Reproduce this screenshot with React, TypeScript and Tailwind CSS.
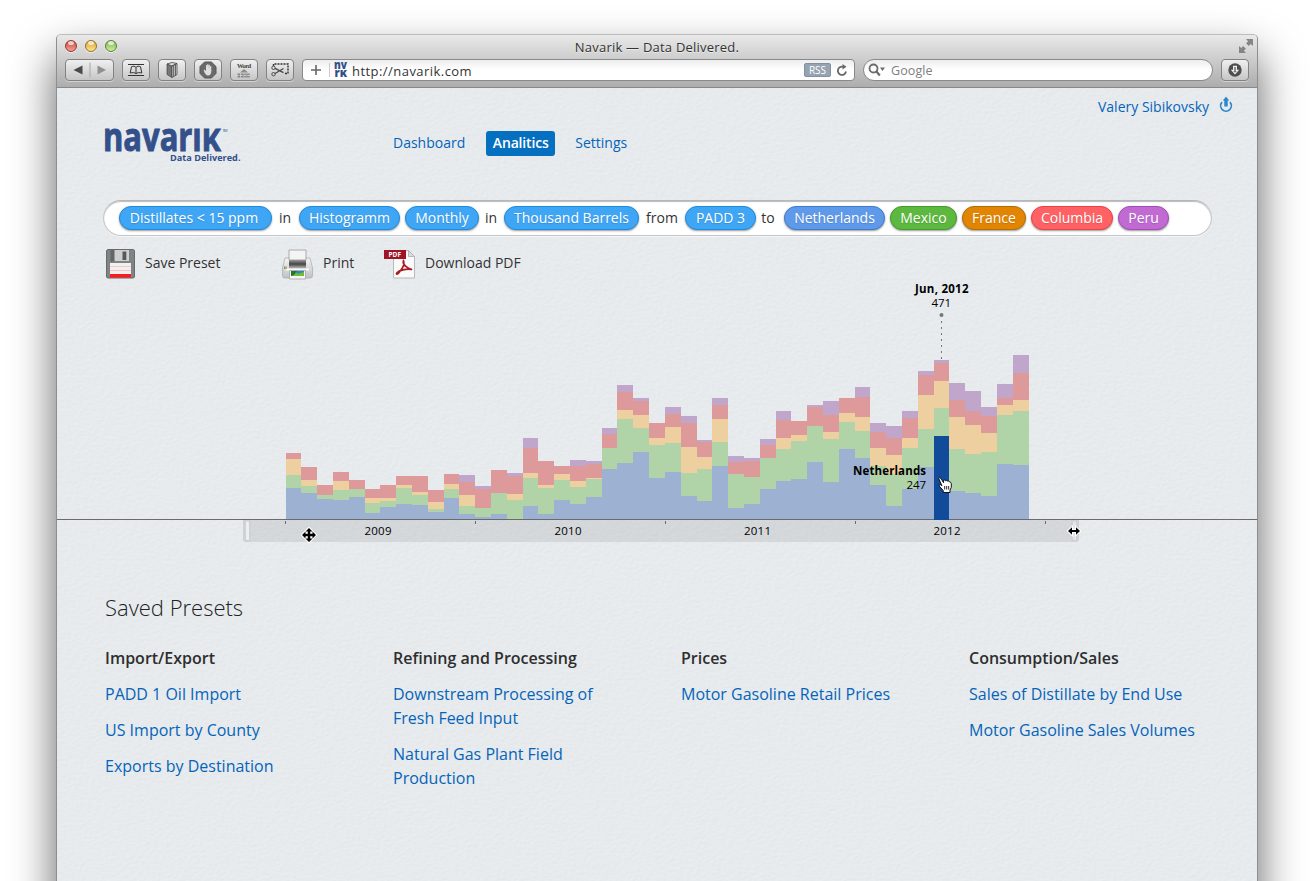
import React from "react";

const BASELINE = 519;
const STEP = 15.81;
const FIRST_X = 286;

// Top edge of each layer per month: peru, columbia, france, mexico, netherlands
const MONTHS: number[][] = [
  [453, 453, 459, 475, 488], [467, 467, 480, 486, 493], [485, 485, 495, 495, 499], [472, 472, 481, 490, 500],
  [480, 480, 489, 489, 497], [489, 489, 498, 503, 513], [485, 485, 498, 501, 507], [476, 476, 485, 488, 504],
  [476, 476, 492, 495, 505], [490, 490, 502, 509, 512], [474, 474, 484, 489, 498], [475, 482, 495, 506, 514],
  [486, 489, 508, 508, 517], [470, 470, 493, 493, 514], [473, 476, 494, 500, 519], [438, 448, 473, 478, 506],
  [461, 461, 485, 488, 514], [466, 466, 474, 480, 500], [460, 466, 481, 487, 504], [461, 464, 478, 479, 497],
  [428, 434, 448, 448, 469], [385, 392, 410, 419, 463], [398, 401, 415, 428, 452], [423, 423, 438, 445, 478],
  [407, 414, 427, 443, 472], [416, 423, 447, 473, 496], [440, 442, 457, 469, 501], [398, 405, 419, 442, 466],
  [456, 462, 474, 474, 508], [458, 461, 477, 477, 504], [439, 445, 458, 458, 489], [411, 420, 438, 449, 481],
  [421, 421, 435, 441, 479], [405, 407, 426, 426, 462], [401, 415, 432, 439, 482], [398, 398, 413, 422, 449],
  [387, 397, 417, 431, 458], [423, 432, 448, 466, 485], [426, 438, 455, 474, 506], [411, 418, 438, 448, 489],
  [371, 375, 395, 429, 467], [360, 363, 381, 408, 436], [383, 400, 417, 449, 491], [391, 411, 425, 454, 493],
  [407, 416, 433, 452, 496], [384, 398, 405, 415, 464], [355, 373, 400, 411, 465],
];
const LAYERS = ["#c1a6cb", "#de9a9b", "#eecfa0", "#b0d3a8", "#9db2d2"];
const SELECTED = 41;
const YEARS = [
  { label: "2009", x: 378 },
  { label: "2010", x: 568 },
  { label: "2011", x: 757.5 },
  { label: "2012", x: 947 },
];

function Texture() {
  return (
    <svg className="pointer-events-none absolute inset-0 h-full w-full opacity-15" aria-hidden="true">
      <filter id="paper" x="0" y="0" width="100%" height="100%" colorInterpolationFilters="sRGB">
        <feTurbulence type="fractalNoise" baseFrequency="0.24 0.36" numOctaves={3} seed={4} result="n" />
        <feDiffuseLighting in="n" surfaceScale={0.32} lightingColor="#eff3f6" diffuseConstant={1.18}>
          <feDistantLight azimuth={235} elevation={55} />
        </feDiffuseLighting>
      </filter>
      <rect width="100%" height="100%" filter="url(#paper)" />
    </svg>
  );
}

function Light({ className }: { className: string }) {
  return (
    <span className={`relative h-3 w-3 overflow-hidden rounded-full border shadow-[0_1px_0_rgba(255,255,255,.6)] ${className}`}>
      <span className="absolute left-[2px] top-0 h-1 w-[6px] rounded-full bg-white/70" />
    </span>
  );
}

function ToolButton({ className = "w-[28px]", children }: { className?: string; children: React.ReactNode }) {
  return (
    <span
      className={`flex h-[22px] shrink-0 items-center justify-center rounded-[4px] border border-[#828282] bg-linear-to-b from-[#f0f0f0] to-[#c6c6c6] shadow-[0_1px_0_rgba(255,255,255,.4)] ${className}`}
    >
      {children}
    </span>
  );
}

function BrowserChrome() {
  return (
    <header className="relative h-[53px] rounded-t-[4px] border-b border-[#888] bg-linear-to-b from-[#e9e9e9] to-[#adadad]">
      <div className="flex h-6 items-center pl-2">
        <div className="-mt-[3px] flex w-[60px] gap-2">
          <Light className="border-[#8f3a32] bg-linear-to-b from-[#c93f35] to-[#f5a095]" />
          <Light className="border-[#95702a] bg-linear-to-b from-[#dc9f30] to-[#fbe68c]" />
          <Light className="border-[#5b8038] bg-linear-to-b from-[#7bb150] to-[#cdf09d]" />
        </div>
        <h1 className="flex-1 text-center text-[13px] leading-6 tracking-[0.22px] text-[#333] [text-shadow:0_1px_0_rgba(255,255,255,.5)]">
          Navarik — Data Delivered.
        </h1>
        <div className="-mt-[3px] flex w-[68px] justify-end pr-[3px]">
          <svg width="16" height="16" viewBox="0 0 16 16" fill="#858585">
            <path d="M8 1h7v7l-2.200-2.100-2 2-2.700-2.700 2-2zM1 8l2.200 2.100 2-2L7.900 10.800l-2 2L8 15H1z" />
          </svg>
        </div>
      </div>
      <div className="flex h-[22px] items-center gap-2 pl-2 pr-2">
        <ToolButton className="w-[49px]">
          <svg width="47" height="20" viewBox="0 0 47 20">
            <path d="M16.500 5.500v9l-9-4.500z" fill="#4a4a4a" />
            <path d="M24 2.500v15" stroke="#a5a5a5" />
            <path d="M31.500 5.500v9l8.500-4.500z" fill="#909090" />
          </svg>
        </ToolButton>
        <ToolButton>
          <svg width="18" height="14" viewBox="0 0 18 14" fill="none" stroke="#333">
            <path d="M1 1.500h16M1 12.500h16" strokeWidth="1.100" />
            <path d="M9 4.500v6M9 4.500C8 3 6 3 4.500 3.700l-1.300 6.300c2-.6 4.300-.6 5.800.6 1.500-1.200 3.800-1.200 5.800-.6l-1.300-6.300C12 3 10 3 9 4.500z" />
          </svg>
        </ToolButton>
        <ToolButton>
          <svg width="12" height="16" viewBox="0 0 12 16">
            <path d="m1 2 5 2v11.500l-5-3z" fill="#777" stroke="#444" strokeWidth=".7" />
            <path d="m1 2 5-1.500 5 1L6 4zM6 4l5-2.500v11L6 15.500z" fill="#ddd" stroke="#444" strokeWidth=".8" />
            <path d="M7.700 3.500v11M9.400 2.700v11" stroke="#555" />
          </svg>
        </ToolButton>
        <ToolButton>
          <svg width="18" height="18" viewBox="0 0 18 18">
            <path d="M5.600 1h6.800L17 5.600v6.800L12.400 17H5.600L1 12.400V5.600z" fill="#6a6a6a" stroke="#555" />
            <path d="M5.500 8.500 7 10V4.500q.7-.8 1.200 0V8 3.500q.7-.8 1.300 0V8l.2-4q.7-.7 1.200 0v4.300l.2-3q.7-.6 1.200 0v5.200Q12 14.500 9 14.500q-2.400 0-4.300-5z" fill="#dedede" />
          </svg>
        </ToolButton>
        <ToolButton>
          <svg width="18" height="18" viewBox="0 0 18 18" fill="#3d3d3d" className="overflow-visible">
            <text x="9" y="7" textAnchor="middle" fontSize="6.500" fontWeight="700" textLength="14" fontFamily="Liberation Serif, serif">Word</text>
            <path d="m9 8 4 3.500H5z" fill="#8c8c8c" />
            <path d="M2.500 13.200h13M2.500 15.800h13" stroke="#666" strokeDasharray="2.500 .8" strokeWidth=".9" />
            <path d="M4 12.500v4M8 12.500v4M12 12.500v4" stroke="#777" strokeWidth=".7" />
          </svg>
        </ToolButton>
        <ToolButton>
          <svg width="20" height="16" viewBox="0 0 20 16" fill="none" stroke="#4a4a4a">
            <path d="M3.500 4V2H18v9.500h-3" strokeDasharray="2 1" strokeWidth="1.400" stroke="#333" />
            <path d="m5 6.300 8.500 4.300M5 11.500l8.500-5" strokeWidth="1.300" />
            <circle cx="3.500" cy="5.800" r="1.700" />
            <circle cx="3.500" cy="12.200" r="1.700" />
          </svg>
        </ToolButton>
        <div className="flex h-[22px] w-[553px] shrink-0 items-center rounded-[4px] border border-[#8a8a8a] bg-linear-to-b from-[#ededed] via-white to-white pl-[7px] pr-[6px]">
          <svg width="20" height="14" viewBox="0 0 20 14" className="shrink-0">
            <path d="M1 7h10M6 2v10" stroke="#666" strokeWidth="1.600" />
            <path d="M19.500 0v14" stroke="#c9c9c9" />
          </svg>
          <svg width="15" height="18" viewBox="0 0 15 18" className="ml-1 shrink-0 overflow-visible" fill="#31508a">
            <g fontFamily="Open Sans, sans-serif" fontWeight="800" fontSize="12">
              <text x="0" y="7.500" textLength="13" lengthAdjust="spacingAndGlyphs">nv</text>
              <text x="0.500" y="15.500" textLength="12.500" lengthAdjust="spacingAndGlyphs">rĸ</text>
            </g>
          </svg>
          <span className="ml-[3px] flex-1 pt-[3px] text-[13px] tracking-[0.45px] text-[#333]">http://navarik.com</span>
          <span className="flex h-[14px] w-[27px] items-center justify-center rounded-[2px] border border-[#8290a0] bg-[#96a3b1] text-[10px] leading-none text-white">
            RSS
          </span>
          <svg width="12" height="13" viewBox="0 0 12 13" className="ml-[5px]" fill="none" stroke="#666" strokeWidth="1.800">
            <path d="M7 2.800A4.100 4.100 0 1 0 10 7.500" />
            <path d="M6.500 0v5.600L10.500 2.800z" fill="#666" stroke="none" />
          </svg>
        </div>
        <div className="flex h-[22px] w-[350px] shrink-0 items-center rounded-full border border-[#8a8a8a] bg-linear-to-b from-[#ededed] via-white to-white pl-1">
          <svg width="18" height="14" viewBox="0 0 18 14" fill="none" stroke="#6a6a6a" strokeWidth="1.800">
            <circle cx="5.500" cy="5.500" r="4" />
            <path d="m8.500 8.500 3.300 4" strokeWidth="2.200" />
            <path d="M12 4.500h5L14.500 8z" fill="#6a6a6a" stroke="none" />
          </svg>
          <span className="ml-[5px] pt-[2px] text-[12.500px] tracking-[0.1px] text-[#808080]">Google</span>
        </div>
        <ToolButton>
          <svg width="14" height="14" viewBox="0 0 14 14">
            <circle cx="7" cy="7" r="6.700" fill="#4e4e4e" />
            <path d="M5 2.700h4v4.100h2.200L7 11.500 2.800 6.800H5z" fill="#f0f0f0" />
            <path d="M6.200 3.900h1.600v4h1L7 9.800 5.200 7.900h1z" fill="#777" />
          </svg>
        </ToolButton>
      </div>
    </header>
  );
}

function Logo() {
  return (
    <svg width="140" height="40" viewBox="105 125 140 40" className="overflow-visible" fill="#33508a" fontFamily="Open Sans, sans-serif">
      <text x="103" y="150" fontSize="40" fontWeight="700" stroke="#33508a" strokeWidth="1" textLength="118" lengthAdjust="spacingAndGlyphs">navarıĸ</text>
      <text x="222.500" y="131" fontSize="4" textLength="5">TM</text>
      <text x="170" y="160" fontSize="9.500" fontWeight="700" textLength="70.500" lengthAdjust="spacingAndGlyphs">Data Delivered.</text>
    </svg>
  );
}

const blue = "border-[#1b8ce0] bg-[#3fa5f5]";

function Pill({ className, children }: { className: string; children: React.ReactNode }) {
  return (
    <span
      className={`flex h-6 shrink-0 items-center justify-center rounded-full border pb-px text-[14px] font-medium leading-none text-white shadow-[0_1px_2px_rgba(0,0,0,.4)] [text-shadow:0_1px_1px_rgba(0,0,0,.15)] ${className}`}
    >
      {children}
    </span>
  );
}

function Word({ className, children }: { className: string; children: React.ReactNode }) {
  return <span className={`shrink-0 pb-px text-center text-[14px] leading-none text-[#333] ${className}`}>{children}</span>;
}

function QueryBar() {
  return (
    <div className="ml-[46px] flex h-9 w-[1109px] items-center rounded-full border border-[#c3c6c8] border-t-[#b5b8ba] bg-white pl-[15px] shadow-[inset_0_1px_1px_#bbb,0_1px_0_#f4f6f7]">
      <Pill className={`w-[153px] pr-[3px] ${blue}`}>Distillates &lt; 15 ppm</Pill>
      <Word className="w-[27px] pr-px">in</Word>
      <Pill className={`mr-[5px] w-[101px] ${blue}`}>Histogramm</Pill>
      <Pill className={`w-[74px] ${blue}`}>Monthly</Pill>
      <Word className="w-[25px] pr-px">in</Word>
      <Pill className={`w-[135px] ${blue}`}>Thousand Barrels</Pill>
      <Word className="w-[46px]">from</Word>
      <Pill className={`w-[71px] ${blue}`}>PADD 3</Pill>
      <Word className="w-[28px] pr-1">to</Word>
      <Pill className="mr-[5px] w-[101px] border-[#3f7bc9] bg-[#5f99ea]">Netherlands</Pill>
      <Pill className="mr-[5px] w-[67px] border-[#459a2c] bg-[#5cb83e]">Mexico</Pill>
      <Pill className="mr-[5px] w-[64px] border-[#b06d08] bg-[#e18502]">France</Pill>
      <Pill className="mr-[5px] w-[82px] border-[#ee3e46] bg-[#ff6265]">Columbia</Pill>
      <Pill className="w-[51px] border-[#a24bb6] bg-[#c16bd2]">Peru</Pill>
    </div>
  );
}

function FloppyIcon() {
  return (
    <svg width="29" height="30" viewBox="0 0 29 30">
      <path d="M1.500 .5h26l1 1V28l-1 1h-26l-1-1V1.500z" fill="#808383" stroke="#686b6b" />
      <path d="M5 1h18v11H5z" fill="#cdcfd0" />
      <path d="M4.500 1h4v11.500h-4z" fill="#636666" />
      <path d="M16.500 2.500h3.800V11h-3.800z" fill="#565959" />
      <path d="M4 14h21v11H4z" fill="#f2efef" />
      <path d="M4 17.500h21M4 21.500h21" stroke="#f0c8c8" />
      <path d="M4 25h21v3.500H4z" fill="#fb1c22" />
    </svg>
  );
}

function PrinterIcon() {
  return (
    <svg width="31" height="31" viewBox="0 0 31 31">
      <defs>
        <linearGradient id="slot" x2="0" y2="1">
          <stop offset="0" stopColor="#999" />
          <stop offset=".45" stopColor="#444" />
          <stop offset="1" stopColor="#ccc" />
        </linearGradient>
        <linearGradient id="body" x2="0" y2="1">
          <stop offset="0" stopColor="#f5f5f5" />
          <stop offset="1" stopColor="#bfc1c2" />
        </linearGradient>
      </defs>
      <path d="M3 9h25l2.500 10v7.500q0 2.500-2 2.500h-26q-2 0-2-2.500V19z" fill="url(#body)" stroke="#acaeb0" strokeWidth=".8" />
      <path d="M7 1h17v10H7z" fill="#f4f4f4" stroke="#aaa" />
      <path d="M7 11h17v9H7z" fill="url(#slot)" />
      <path d="M4 19.500h23v2H4z" fill="#fafafa" />
      <path d="M7.500 21.500h16V30h-16z" fill="#f6f6f6" stroke="#b0b0b0" />
      <path d="M9 22h13v5H9z" fill="#258ec1" />
      <path d="m9 27 4-4 3 2 6-2v4z" fill="#78bb31" />
      <path d="m9 22 6 0-3 4-3 1z" fill="#29713a" />
      <path d="M2 17.500h1.500v2.500H2z" fill="#34a8c5" />
      <path d="M3.500 17.500H5v2.500H3.500z" fill="#e4a51b" />
    </svg>
  );
}

function PdfIcon() {
  return (
    <svg width="32" height="30" viewBox="0 0 32 30">
      <path d="M9.500 1.500h15l6 6v21.500h-21z" fill="#fafafa" stroke="#b8b9ba" />
      <path d="M24.500 1.500v6h6z" fill="#ddd" stroke="#aaa" strokeWidth=".8" />
      <path d="M0 1h22v9H0z" fill="#a01526" />
      <text x="4.500" y="8.200" fontSize="7" fontWeight="700" fill="white" fontFamily="Open Sans, sans-serif" textLength="12.500" lengthAdjust="spacingAndGlyphs">PDF</text>
      <path d="M19.500 11.500c1.500 4-1 8-4 11.500-2 2.700-4 2.700-2.500.7 2-2.400 9-4.200 14.500-3.400M19.500 11.500c-1.500 4 3.500 7.500 8 9" fill="none" stroke="#aa1822" strokeWidth="1.700" strokeLinecap="round" />
    </svg>
  );
}

function Actions() {
  return (
    <div className="flex h-11 items-start pl-[49px] pt-[13px] text-[14px] leading-[28px] text-[#333]">
      <div className="flex w-[176px] gap-[10px]"><FloppyIcon /><span>Save Preset</span></div>
      <div className="flex w-[102px] gap-[10px]"><PrinterIcon /><span>Print</span></div>
      <div className="flex gap-[9px]"><PdfIcon /><span>Download PDF</span></div>
    </div>
  );
}

function edge(i: number) {
  return Math.max(FIRST_X, Math.floor(FIRST_X + i * STEP - 0.04));
}

function Chart() {
  return (
    <svg className="block" width="1200" height="270" viewBox="57 280 1200 270" fontFamily="Open Sans, sans-serif" fontSize="11.500">
      <path d="M243 520h836v19q0 3-3 3H246q-3 0-3-3z" fill="#000" fillOpacity=".08" />
      <path d="M243 520h8v22h-5q-3 0-3-3zM1071 520h8v19q0 3-3 3h-5z" fill="#000" fillOpacity=".025" />
      <rect x="246" y="521.500" width="3" height="18.500" rx="1" fill="#eceff1" />
      <rect x="1073" y="521.500" width="3" height="18.500" rx="1" fill="#e4e7e9" />
      <g shapeRendering="crispEdges">
        {MONTHS.map((tops, i) =>
          tops.map((top, layer) => {
            const bottom = layer < 4 ? tops[layer + 1] : BASELINE;
            if (bottom <= top) return null;
            const selected = i === SELECTED && layer === 4;
            return (
              <rect
                key={`${i}-${layer}`}
                x={edge(i)}
                y={top}
                width={edge(i + 1) - edge(i)}
                height={bottom - top}
                fill={selected ? "#114b9a" : LAYERS[layer]}
              />
            );
          }),
        )}
        <rect x="57" y="519" width="1200" height="1" fill="#6c6a6c" />
        <rect x="934" y="519" width="15" height="1" fill="#114b9a" />
        {[285, 475, 665, 855, 1045].map((x) => (
          <rect key={x} x={x} y="521" width="1" height="3" fill="#6c6a6c" />
        ))}
      </g>
      {YEARS.map((year) => (
        <text key={year.label} x={year.x - 13.5} y="535" textLength="27">{year.label}</text>
      ))}
      <text x="915" y="293" fontWeight="700" textLength="53.500">Jun, 2012</text>
      <text x="931.500" y="307" textLength="19.500">471</text>
      <circle cx="941.500" cy="315" r="2" fill="#777" />
      <path d="M941.500 321v38" stroke="#777" strokeDasharray="2 4" />
      <text x="853" y="475" fontWeight="700" textLength="73">Netherlands</text>
      <text x="906.500" y="489" textLength="19.500">247</text>
      <path
        d="M309 528l3.500 3.500h-2.300v2.300h2.300v-2.300L316 535l-3.500 3.500v-2.300h-2.300v2.300h2.300L309 542l-3.500-3.500h2.300v-2.300h-2.300v2.300L302 535l3.500-3.500v2.300h2.300v-2.300h-2.300z"
        fill="#000" stroke="#fff" strokeWidth="2" paintOrder="stroke"
      />
      <path d="M1068 531l4-3.700v2.700h4v-2.700l4 3.700-4 3.700V532h-4v2.700z" fill="#000" stroke="#fff" strokeWidth="2" paintOrder="stroke" />
      <g transform="translate(-0.8 -0.5)">
        <path
          d="M939.500 479q1-1.700 2.500.2l2.300 4V481q1.300-1 2 .2 1.300-.7 2 .3 1.300-.4 1.800.7 1.500 0 2 2v3.800l-1.300 2.500v2.500H944v-2l-4-4.500q-.7-2 1.300-1.300l1.400 1z"
          fill="#fff" stroke="#111"
        />
        <path d="M945.500 486.500v3.500M947.500 486.500v3.500M949.500 486.500v3.500" stroke="#111" strokeWidth=".9" />
      </g>
    </svg>
  );
}

const PRESETS = [
  { title: "Import/Export", links: ["PADD 1 Oil Import", "US Import by County", "Exports by Destination"] },
  { title: "Refining and Processing", links: ["Downstream Processing of Fresh Feed Input", "Natural Gas Plant Field Production"] },
  { title: "Prices", links: ["Motor Gasoline Retail Prices"] },
  { title: "Consumption/Sales", links: ["Sales of Distillate by End Use", "Motor Gasoline Sales Volumes"] },
];

function Presets() {
  return (
    <section className="pl-12 pt-[41px]">
      <h2 className="text-[22px] font-light leading-8 text-[#222]">Saved Presets</h2>
      <div className="mt-[23px] grid grid-cols-4">
        {PRESETS.map((group) => (
          <div key={group.title} className="flex flex-col gap-3 text-[16px] leading-6">
            <h3 className="font-semibold text-[#2e2e2e]">{group.title}</h3>
            {group.links.map((link) => (
              <a key={link} className="w-[230px] text-[#0564b9]">{link}</a>
            ))}
          </div>
        ))}
      </div>
    </section>
  );
}

export default function App() {
  return (
    <div className="h-[881px] w-[1314px] overflow-hidden bg-white px-14 pt-[34px] font-['Open_Sans',sans-serif]">
      <div className="h-[960px] w-[1202px] rounded-t-[5px] border border-[#8e8e8e] border-t-[#bdbdbd] bg-[#e7ebee] shadow-[0_22px_44px_rgba(0,0,0,.62)]">
        <BrowserChrome />
        <main className="relative h-[906px] overflow-hidden">
          <Texture />
          <div className="relative">
            <div className="flex h-[38px] items-center justify-end pb-px pr-[24px] text-[14px] leading-none text-[#0564b9]">
              <span>Valery Sibikovsky</span>
              <svg width="14" height="18" viewBox="0 0 14 18" className="mb-[3px] ml-[10px]">
                <path d="M3.100 6.200a5.300 5.300 0 1 0 7.800 0" fill="none" stroke="#2c86c9" strokeWidth="1.700" />
                <path d="M7 .8 10.300 4.500H8.700v6H5.300v-6H3.700z" fill="#2c86c9" />
              </svg>
            </div>
            <div className="flex h-[74px] items-start pl-12">
              <div className="w-[288px]"><Logo /></div>
              <nav className="flex items-center pt-[5px] text-[14px] leading-[24px] text-[#0564b9]">
                <a className="pb-px">Dashboard</a>
                <a className="ml-[21px] mr-5 flex h-[25px] w-[69px] items-center justify-center rounded-[3px] bg-[#056fc0] pb-px font-semibold tracking-[-0.15px] text-white">Analitics</a>
                <a className="pb-px">Settings</a>
              </nav>
            </div>
            <QueryBar />
            <Actions />
            <Chart />
            <Presets />
          </div>
        </main>
      </div>
    </div>
  );
}
